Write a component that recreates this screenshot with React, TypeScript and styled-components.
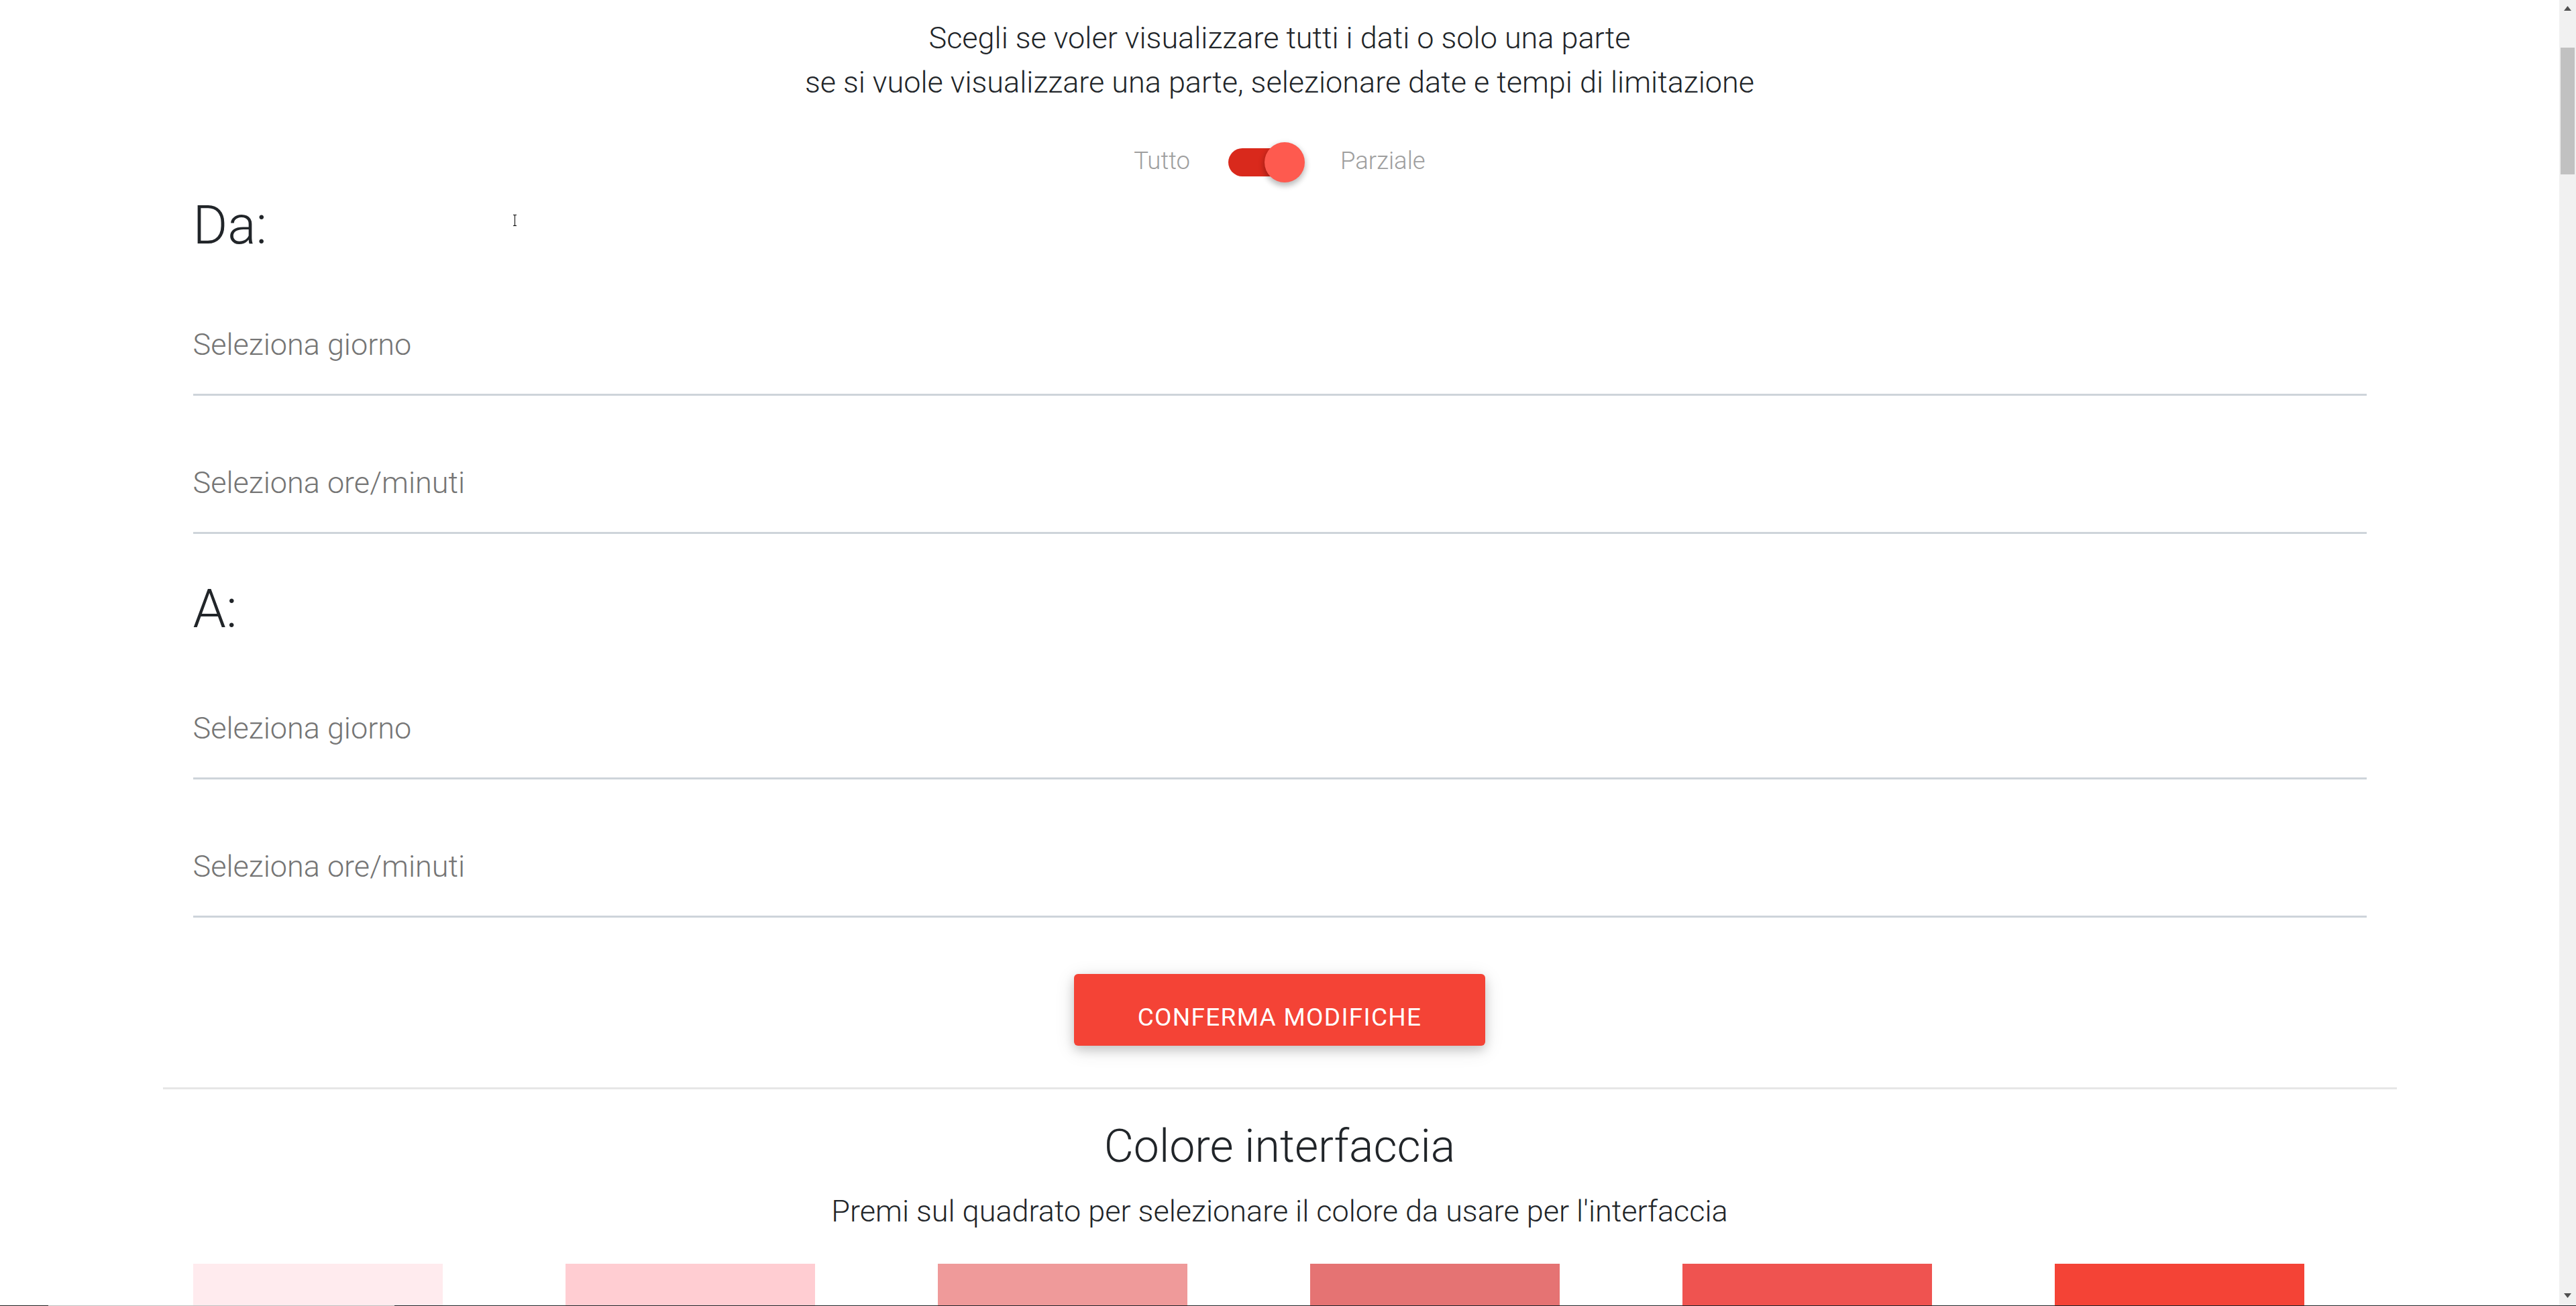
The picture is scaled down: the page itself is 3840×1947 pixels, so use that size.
import React from "react";
import styled, { createGlobalStyle } from "styled-components";

const GlobalStyle = createGlobalStyle`
  html, body {
    margin: 0;
    padding: 0;
    overflow: hidden;
    background: #ffffff;
  }
  body {
    font-family: Roboto, "Noto Sans", "Liberation Sans", sans-serif;
    font-weight: 300;
    color: #212529;
  }
  * { box-sizing: border-box; }
`;

const Shell = styled.div`
  display: flex;
  align-items: flex-start;
  width: 100vw;
  height: 100vh;
  overflow: hidden;
`;

const Main = styled.main`
  flex: 1;
  min-width: 0;
`;

const Intro = styled.div`
  padding-top: 24px;
  text-align: center;
  font-size: 45px;
  line-height: 66px;
  color: #212529;
`;

const ToggleRow = styled.div`
  display: flex;
  justify-content: center;
  align-items: center;
  height: 60px;
  margin-top: 56px;
`;

const ToggleLabel = styled.span`
  font-size: 36.5px;
  color: #9e9e9e;
  padding-bottom: 6px;
`;

const Lever = styled.span`
  position: relative;
  display: block;
  width: 111px;
  height: 42px;
  margin: 0 56px 0 57px;
  border-radius: 21px;
  background: #d9291c;
`;

const Knob = styled.span`
  position: absolute;
  left: 54px;
  top: -9px;
  width: 60px;
  height: 60px;
  border-radius: 50%;
  background: #fe5a4f;
  box-shadow: 0 4px 9px 1px rgba(0, 0, 0, 0.28);
`;

const Container = styled.div`
  width: 3330px;
  margin: 0 auto;
`;

const Form = styled.div`
  padding: 0 45px;
`;

const Heading = styled.h2<{ $top: number }>`
  margin: ${(p) => p.$top}px 0 0;
  font-size: 79px;
  font-weight: 300;
  line-height: 95px;
  color: #212529;
`;

const Field = styled.div`
  padding: 101px 0 45px;
  border-bottom: 3px solid #ced4da;
`;

const FieldLabel = styled.label`
  display: block;
  font-size: 45px;
  line-height: 57px;
  color: #757575;
`;

const ButtonRow = styled.div`
  display: flex;
  justify-content: center;
  margin-top: 84px;
`;

const ConfirmButton = styled.button`
  display: flex;
  align-items: center;
  justify-content: center;
  width: 613px;
  height: 107px;
  padding: 22px 0 0;
  border: none;
  border-radius: 6px;
  background: #f44336;
  color: #ffffff;
  font-family: Roboto, "Liberation Sans", sans-serif;
  font-size: 37px;
  font-weight: 400;
  letter-spacing: 1.3px;
  text-transform: uppercase;
  box-shadow: 0 6px 15px 0 rgba(0, 0, 0, 0.16), 0 6px 30px 0 rgba(0, 0, 0, 0.12);
  cursor: pointer;
`;

const Divider = styled.hr`
  margin: 62px 0 0;
  border: 0;
  border-top: 3px solid #e6e6e6;
`;

const SectionTitle = styled.h3`
  margin: 44px 0 0;
  text-align: center;
  font-size: 68px;
  font-weight: 300;
  line-height: 83px;
  color: #212529;
`;

const SectionText = styled.p`
  margin: 23px 0 0;
  text-align: center;
  font-size: 45px;
  line-height: 63px;
  color: #212529;
`;

const SwatchGrid = styled.div`
  display: grid;
  grid-template-columns: repeat(6, 1fr);
  margin-top: 47px;
`;

const SwatchCell = styled.div`
  padding: 0 45px;
`;

const Swatch = styled.div<{ $color: string }>`
  width: 372px;
  height: 372px;
  background: ${(p) => p.$color};
  cursor: pointer;
`;

const Rail = styled.div`
  width: 25px;
  height: 100vh;
  flex: 0 0 25px;
  display: flex;
  flex-direction: column;
  align-items: center;
  background: #f1f1f1;
`;

const RailArrow = styled.div`
  height: 71px;
  display: flex;
  justify-content: center;
  align-items: flex-start;
  padding-top: 9px;
`;

const RailArrowBottom = styled.div`
  margin-top: auto;
  height: 25px;
  display: flex;
  justify-content: center;
  align-items: flex-start;
  padding-top: 6px;
`;

const Thumb = styled.div`
  width: 21px;
  height: 189px;
  background: #c1c1c1;
`;

const Cursor = styled.svg`
  position: fixed;
  left: 764px;
  top: 320px;
  pointer-events: none;
`;

const BottomEdge = styled.div`
  position: fixed;
  left: 0;
  right: 0;
  bottom: 0;
  height: 1px;
  background: linear-gradient(
    to right,
    #1f1f1f 0,
    #1f1f1f 72px,
    #c0c0c0 72px,
    #c0c0c0 588px,
    #22262a 588px
  );
`;

const swatches = ["#ffebee", "#ffcdd2", "#ef9a9a", "#e57373", "#ef5350", "#f44336"];

const blocks = [
  { title: "Da:", top: 17 },
  { title: "A:", top: 65 },
];

export default function App() {
  return (
    <>
      <GlobalStyle />
      <Shell>
        <Main>
          <Intro>
            <div>Scegli se voler visualizzare tutti i dati o solo una parte</div>
            <div>se si vuole visualizzare una parte, selezionare date e tempi di limitazione</div>
          </Intro>
          <ToggleRow>
            <ToggleLabel>Tutto</ToggleLabel>
            <Lever>
              <Knob />
            </Lever>
            <ToggleLabel>Parziale</ToggleLabel>
          </ToggleRow>
          <Container>
            <Form>
              {blocks.map((b) => (
                <div key={b.title}>
                  <Heading $top={b.top}>{b.title}</Heading>
                  <Field>
                    <FieldLabel>Seleziona giorno</FieldLabel>
                  </Field>
                  <Field>
                    <FieldLabel>Seleziona ore/minuti</FieldLabel>
                  </Field>
                </div>
              ))}
            </Form>
            <ButtonRow>
              <ConfirmButton>Conferma modifiche</ConfirmButton>
            </ButtonRow>
            <Divider />
            <SectionTitle>Colore interfaccia</SectionTitle>
            <SectionText>Premi sul quadrato per selezionare il colore da usare per l'interfaccia</SectionText>
            <SwatchGrid>
              {swatches.map((c) => (
                <SwatchCell key={c}>
                  <Swatch $color={c} />
                </SwatchCell>
              ))}
            </SwatchGrid>
          </Container>
        </Main>
        <Rail>
          <RailArrow>
            <svg width="11" height="7" viewBox="0 0 11 7">
              <polygon points="5.5,0 11,7 0,7" fill="#505050" />
            </svg>
          </RailArrow>
          <Thumb />
          <RailArrowBottom>
            <svg width="11" height="7" viewBox="0 0 11 7">
              <polygon points="0,0 11,0 5.5,7" fill="#505050" />
            </svg>
          </RailArrowBottom>
        </Rail>
      </Shell>
      <Cursor width="7" height="17" viewBox="0 0 7 17">
        <path d="M1 0.5 H6 M3.5 0.5 V16.5 M1 16.5 H6" stroke="#000" strokeWidth="1" fill="none" />
      </Cursor>
      <BottomEdge />
    </>
  );
}
